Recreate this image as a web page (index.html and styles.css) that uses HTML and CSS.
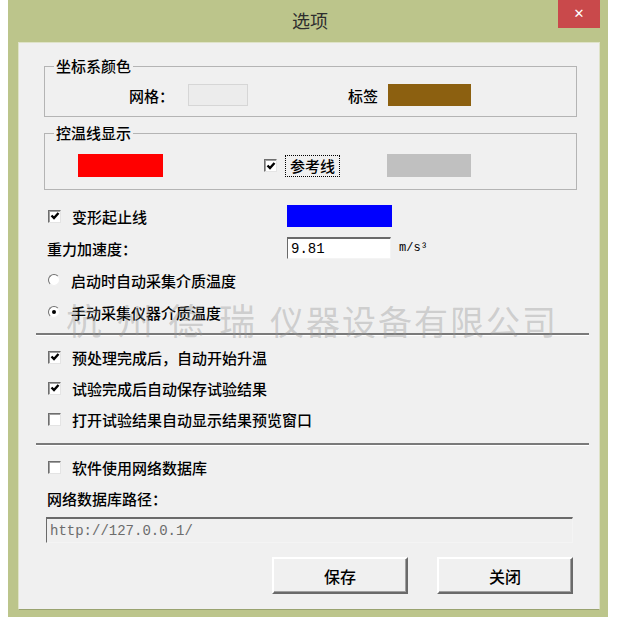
FILE: index.html
```html
<!DOCTYPE html>
<html lang="zh-CN">
<head>
    <meta charset="UTF-8">
    <title>选项</title>
    <link rel="stylesheet" href="styles.css">
</head>
<body>
    <div class="window">
        <div class="titlebar">
            <span class="title">选项</span>
            <span class="close">✕</span>
        </div>

        <div class="client">
            <fieldset class="group group-axis">
                <legend>坐标系颜色</legend>
                <div class="group-row">
                    <span class="lbl lbl-grid">网格：</span>
                    <span class="swatch sw-grid"></span>
                    <span class="lbl lbl-tag">标签</span>
                    <span class="swatch sw-tag"></span>
                </div>
            </fieldset>

            <fieldset class="group group-temp">
                <legend>控温线显示</legend>
                <div class="group-row">
                    <span class="swatch sw-red"></span>
                    <span class="chk chk-ref checked"><svg viewBox="0 0 10 10"><path d="M1.5 4.5 L4 7 L8.5 2"/></svg></span>
                    <span class="focus-lbl">参考线</span>
                    <span class="swatch sw-gray"></span>
                </div>
            </fieldset>

            <div class="form-grid">
                <div class="row"><span class="chk checked"><svg viewBox="0 0 10 10"><path d="M1.5 4.5 L4 7 L8.5 2"/></svg></span><span>变形起止线</span></div>
                <div class="row"><span class="swatch sw-blue"></span></div>
                <div class="row"></div>

                <div class="row"><span class="plain">重力加速度：</span></div>
                <div class="row"><span class="field">9.81</span></div>
                <div class="row"><span class="unit">m/s³</span></div>
            </div>

            <div class="row radio-row"><span class="radio"></span><span>启动时自动采集介质温度</span></div>
            <div class="row radio-row"><span class="radio selected"></span><span>手动采集仪器介质温度</span></div>

            <div class="watermark" aria-hidden="true"><span class="wm-a">杭州德瑞</span><span class="wm-b">仪器设备有限公司</span></div>

            <div class="separator"></div>

            <div class="row check-row first"><span class="chk checked"><svg viewBox="0 0 10 10"><path d="M1.5 4.5 L4 7 L8.5 2"/></svg></span><span>预处理完成后，自动开始升温</span></div>
            <div class="row check-row"><span class="chk checked"><svg viewBox="0 0 10 10"><path d="M1.5 4.5 L4 7 L8.5 2"/></svg></span><span>试验完成后自动保存试验结果</span></div>
            <div class="row check-row"><span class="chk"></span><span>打开试验结果自动显示结果预览窗口</span></div>

            <div class="separator sep-2"></div>

            <div class="row check-row first"><span class="chk"></span><span>软件使用网络数据库</span></div>
            <div class="row path-label"><span class="plain">网络数据库路径：</span></div>
            <div class="field field-path">http://127.0.0.1/</div>

            <div class="buttons">
                <button class="btn">保存</button>
                <button class="btn">关闭</button>
            </div>
        </div>
    </div>
</body>
</html>
```

FILE: styles.css
```css
body {
    margin: 0;
    background: #ffffff;
    font-family: "Noto Sans CJK SC", "Noto Sans", sans-serif;
    font-size: 15px;
    font-weight: 500;
    color: #000;
}
.window {
    margin-left: 8px;
    width: 600px;
    height: 617px;
    box-sizing: border-box;
    padding: 0 8px 7px 10px;
    background: #bcc58b;
}
.titlebar {
    position: relative;
    height: 42px;
    margin: 0 -8px 0 -10px;
    text-align: center;
}
.title {
    display: inline-block;
    line-height: 40px;
    font-size: 18px;
    font-weight: 400;
    color: #2e2e2e;
    padding-left: 4px;
}
.close {
    position: absolute;
    right: 8px;
    top: 0;
    width: 42px;
    height: 28px;
    background: #c9494b;
    color: #fff;
    font-size: 13px;
    font-weight: bold;
    line-height: 28px;
    text-align: center;
    font-family: "DejaVu Sans", sans-serif;
}
.client {
    position: relative;
    height: 568px;
    box-sizing: border-box;
    padding: 13px 22px 0 25px;
    background: #f0f0f0;
    border: 1px solid #dfe3c8;
    border-bottom-color: #9aa370;
}
.group {
    margin: 0;
    border: 1px solid #b4b4b4;
    min-width: 0;
}
.group legend {
    margin-left: 9px;
    padding: 0 2px;
    line-height: 20px;
}
.group-axis {
    padding: 8px 0 10px;
}
.group-temp {
    margin-top: 6px;
    padding: 11px 0 12px;
}
.group-row {
    display: flex;
    align-items: center;
    height: 22px;
}
.group-temp .group-row {
    height: 23px;
}
.lbl-grid {
    margin-left: 84px;
}
.lbl-tag {
    margin-left: 100px;
}
.swatch {
    display: inline-block;
    height: 22px;
    box-sizing: border-box;
}
.sw-grid {
    width: 60px;
    margin-left: 14px;
    background: #ececec;
    border: 1px solid #d6d6d6;
}
.sw-tag {
    width: 83px;
    margin-left: 10px;
    background: #8c6010;
}
.sw-red {
    width: 85px;
    height: 23px;
    margin-left: 33px;
    background: #ff0000;
}
.sw-gray {
    width: 84px;
    height: 23px;
    margin-left: 47px;
    background: #c0c0c0;
}
.sw-blue {
    width: 105px;
    background: #0000ff;
}
.chk {
    display: inline-flex;
    align-items: center;
    justify-content: center;
    width: 13px;
    height: 13px;
    box-sizing: border-box;
    flex: none;
    background: #fff;
    border: 1px solid;
    border-color: #6e6e6e #e4e4e4 #e4e4e4 #6e6e6e;
    box-shadow: inset 1px 1px 0 #a0a0a0;
}
.chk svg {
    width: 10px;
    height: 10px;
}
.chk svg path {
    fill: none;
    stroke: #000;
    stroke-width: 2.4;
}
.chk-ref {
    margin-left: 101px;
}
.focus-lbl {
    margin-left: 8px;
    padding: 0 4px;
    line-height: 20px;
    border: 1px dotted #000;
}
.form-grid {
    display: grid;
    grid-template-columns: 243px auto 1fr;
    row-gap: 10px;
    margin-top: 15px;
}
.row {
    display: flex;
    align-items: center;
    height: 22px;
}
.row > .chk,
.row > .radio {
    margin-left: 4px;
    margin-right: 11px;
}
.plain {
    margin-left: 3px;
}
.field {
    display: flex;
    align-items: center;
    box-sizing: border-box;
    width: 104px;
    height: 22px;
    padding-left: 3px;
    background: #fff;
    border: 1px solid;
    border-color: #6a6a6a #f4f4f4 #f4f4f4 #6a6a6a;
    border-top-width: 2px;
    font-family: "Liberation Mono", monospace;
    font-size: 14px;
    font-weight: 400;
}
.unit {
    margin-left: 7px;
    font-family: "Liberation Mono", monospace;
    font-size: 12px;
    font-weight: 400;
}
.radio-row {
    margin-top: 10px;
}
.radio {
    width: 12px;
    height: 12px;
    box-sizing: border-box;
    flex: none;
    border-radius: 50%;
    background: #fff;
    border: 1px solid;
    border-color: #707070 #f0f0f0 #f0f0f0 #707070;
    display: inline-flex;
    align-items: center;
    justify-content: center;
}
.radio.selected::after {
    content: "";
    width: 4px;
    height: 4px;
    border-radius: 50%;
    background: #000;
}
.watermark {
    position: absolute;
    left: 47px;
    top: 256px;
    line-height: 40px;
    font-weight: 400;
    color: rgba(150, 150, 150, 0.4);
    white-space: nowrap;
    pointer-events: none;
}
.wm-a {
    font-size: 36px;
    letter-spacing: 15px;
}
.wm-b {
    font-size: 34px;
    letter-spacing: 2px;
}
.separator {
    margin: 10px -12px 0 -8px;
    height: 2px;
    background: #7a7a7a;
    border-bottom: 1px solid #ffffff;
}
.sep-2 {
    margin-top: 13px;
}
.check-row {
    margin-top: 9px;
}
.check-row.first {
    margin-top: 10px;
}
.path-label {
    margin-top: 9px;
}
.field-path {
    width: 527px;
    height: 26px;
    margin: 8px 0 0 2px;
    background: #f0f0f0;
    color: #6c6c6c;
    font-family: "Liberation Mono", monospace;
    font-size: 14px;
}
.buttons {
    display: flex;
    justify-content: flex-end;
    gap: 29px;
    margin: 14px 4px 0 0;
}
.btn {
    width: 136px;
    height: 37px;
    box-sizing: border-box;
    padding: 0;
    background: #f0f0f0;
    border: 2px solid;
    border-color: #ffffff #6a6a6a #6a6a6a #ffffff;
    box-shadow: inset -1px -1px 0 #a0a0a0;
    font-family: "Noto Sans CJK SC", sans-serif;
    font-size: 16px;
    font-weight: 500;
    color: #000;
}
```
